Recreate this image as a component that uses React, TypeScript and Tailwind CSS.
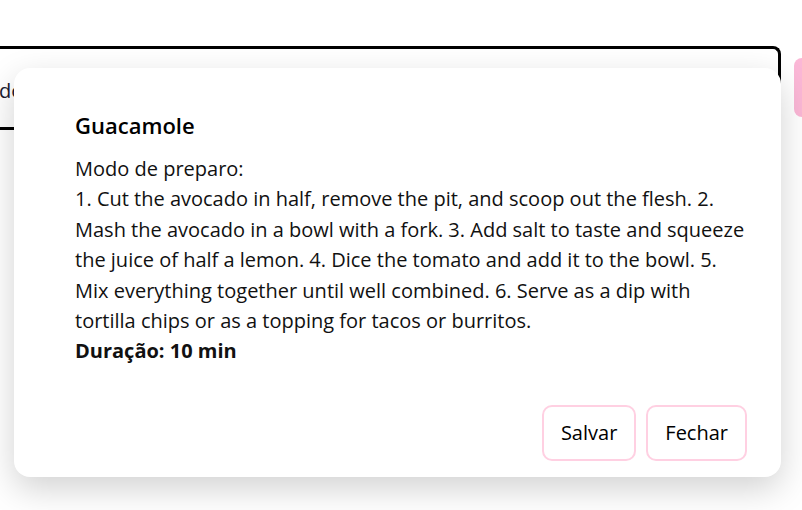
import React from 'react';

const STEPS = [
  '1. Cut the avocado in half, remove the pit, and scoop out the flesh. 2.',
  'Mash the avocado in a bowl with a fork. 3. Add salt to taste and squeeze',
  'the juice of half a lemon. 4. Dice the tomato and add it to the bowl. 5.',
  'Mix everything together until well combined. 6. Serve as a dip with',
  'tortilla chips or as a topping for tacos or burritos.',
];

export default function App() {
  return (
    <div className="relative w-[802px] h-[510px] overflow-hidden bg-white text-black font-['Open_Sans',sans-serif]">
      {/* page behind the dialog */}
      <div className="flex pt-[46px]">
        <div className="w-[781px] h-[220px] shrink-0 border-t-[3px] border-r-[3px] border-black rounded-tr-[8px]">
          <div className="mt-[30px] -ml-[1px] text-[20px] leading-[24px] text-[#1a1a2e]">do</div>
          <div className="mt-[24px] w-[120px] border-b-[3px] border-black" />
        </div>
        <div className="ml-[13px] mt-[12px] w-[40px] h-[59px] shrink-0 rounded-[8px] bg-[#fbb7d6]" />
      </div>

      {/* dialog */}
      <div className="absolute left-[14px] top-[68px] w-[767px] h-[409px] flex flex-col rounded-[16px] bg-white pl-[61px] pr-[34px] pt-[42px] pb-[16px] shadow-[0_12px_34px_rgba(0,0,0,0.18)]">
        <h2 className="text-[22px] leading-[30px] font-semibold">Guacamole</h2>
        <div className="mt-[14px] text-[20px] leading-[30.4px] whitespace-nowrap text-[#111]">
          <p>Modo de preparo:</p>
          {STEPS.map((line) => (
            <p key={line}>{line}</p>
          ))}
          <p className="font-bold">Duração: 10 min</p>
        </div>
        <div className="mt-auto flex justify-end gap-[10px]">
          <button className="h-[56px] px-[17px] rounded-[10px] border-2 border-[#ffd0e2] bg-white text-[20px]">
            Salvar
          </button>
          <button className="h-[56px] px-[17px] rounded-[10px] border-2 border-[#ffd0e2] bg-white text-[20px]">
            Fechar
          </button>
        </div>
      </div>
    </div>
  );
}
